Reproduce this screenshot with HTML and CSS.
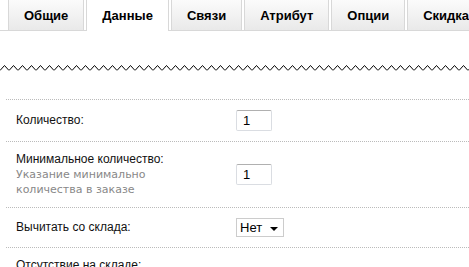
FILE: index.html
```html
<!DOCTYPE html>
<html lang="ru">
<head>
  <meta charset="UTF-8">
  <meta name="viewport" content="width=device-width, initial-scale=1.0">
  <title>Товар — Данные</title>
  <link rel="stylesheet" href="styles.css">
</head>
<body>
  <div class="tabs">
    <div class="tab">Общие</div>
    <div class="tab active">Данные</div>
    <div class="tab">Связи</div>
    <div class="tab">Атрибут</div>
    <div class="tab">Опции</div>
    <div class="tab">Скидка</div>
  </div>

  <div class="zigzag">
    <svg width="100%" height="6">
      <defs>
        <pattern id="zz" width="9" height="6" patternUnits="userSpaceOnUse">
          <polyline points="0,5.5 4.5,0.5 9,5.5" fill="none" stroke="#000" stroke-width="1"/>
        </pattern>
      </defs>
      <rect width="100%" height="6" fill="url(#zz)"/>
    </svg>
  </div>

  <div class="form">
    <div class="row">
      <div class="label">Количество:</div>
      <div class="field"><input class="qty" type="text" value="1"></div>
    </div>
    <div class="row">
      <div class="label">
        Минимальное количество:
        <span class="help">Указание минимально количества в заказе</span>
      </div>
      <div class="field"><input class="qty" type="text" value="1"></div>
    </div>
    <div class="row">
      <div class="label">Вычитать со склада:</div>
      <div class="field">
        <div class="select">Нет <span class="arrow"></span></div>
      </div>
    </div>
    <div class="row">
      <div class="label">Отсутствие на складе:</div>
      <div class="field"></div>
    </div>
  </div>
</body>
</html>
```

FILE: styles.css
```css
body {
  margin: 0;
  font-family: "Liberation Sans", Arial, sans-serif;
  font-size: 12px;
  color: #111;
  background-color: #fff;
  overflow: hidden;
}

.tabs {
  display: flex;
  align-items: flex-start;
  gap: 2px;
  height: 30px;
  padding-left: 8px;
  border-bottom: 1px solid #d8d8d8;
  white-space: nowrap;
}

.tab {
  height: 30px;
  line-height: 32px;
  padding: 0 15px;
  border: 1px solid #d8d8d8;
  border-top: 0;
  border-bottom: 0;
  background: linear-gradient(#fbfbfb, #e9e9e9);
  font-size: 13px;
  font-weight: bold;
  color: #000;
}

.tab.active {
  height: 31px;
  margin-bottom: -1px;
  background: #fff;
}

.zigzag {
  margin-top: 34px;
  height: 6px;
  line-height: 0;
}

.form {
  margin: 28px 0 0 6px;
}

.row {
  display: flex;
  align-items: center;
  padding: 10px 0 10px 10px;
  border-top: 1px dotted #bbb;
}

.label {
  width: 220px;
  line-height: 15px;
}

.help {
  display: block;
  width: 150px;
  font-family: "DejaVu Sans", Verdana, sans-serif;
  font-size: 11px;
  color: #888;
}

.qty {
  box-sizing: border-box;
  width: 36px;
  height: 21px;
  margin: 0;
  padding: 0 6px;
  border: 1px solid #dadde2;
  border-top-color: #b0b0b0;
  border-radius: 2px;
  font-family: "Liberation Sans", Arial, sans-serif;
  font-size: 13px;
  color: #000;
}

.select {
  box-sizing: border-box;
  display: flex;
  align-items: center;
  gap: 8px;
  width: 48px;
  height: 19px;
  padding-left: 3px;
  border: 1px solid #ccc;
  font-size: 13px;
  color: #000;
}

.arrow {
  width: 0;
  height: 0;
  margin-top: 2px;
  border-left: 4px solid transparent;
  border-right: 4px solid transparent;
  border-top: 4px solid #000;
}
```
